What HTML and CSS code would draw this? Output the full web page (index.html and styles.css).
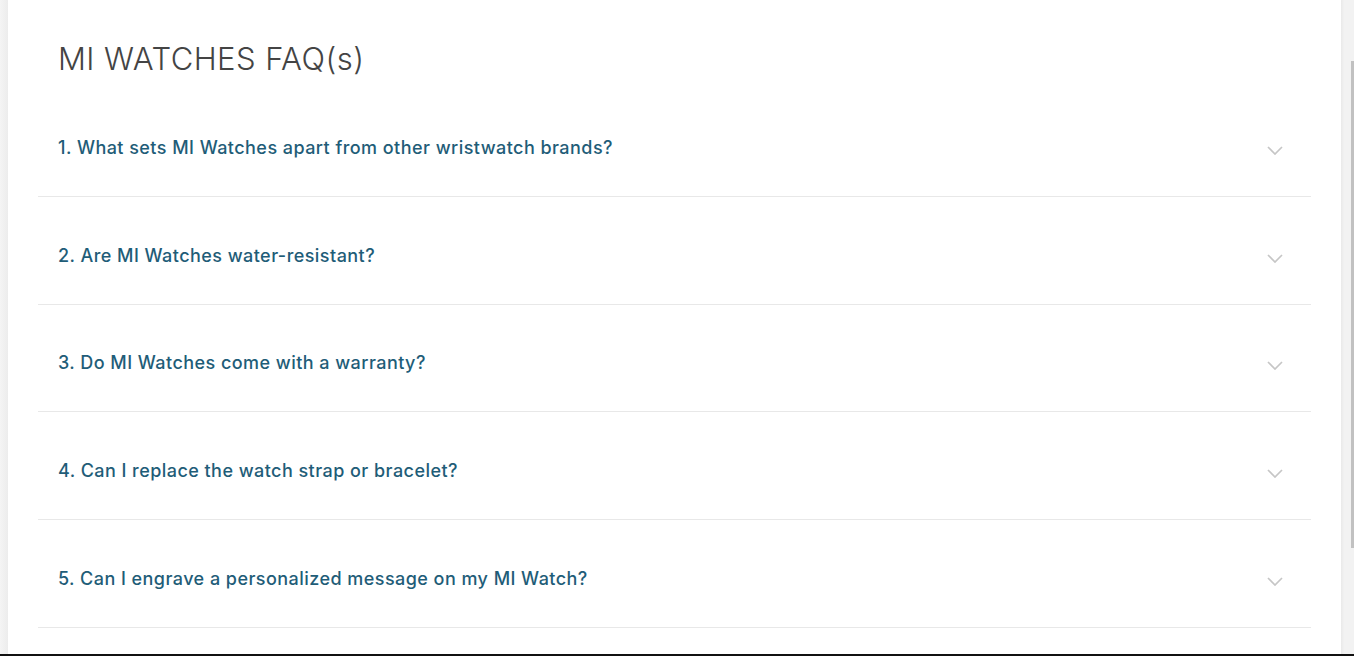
FILE: index.html
```html
<!DOCTYPE html>
<html lang="en">
<head>
<meta charset="utf-8">
<title>MI Watches FAQ</title>
<link rel="stylesheet" href="styles.css">
</head>
<body>
<div class="page">
  <div class="gutter"></div>
  <main class="card">
    <h1 class="title">MI WATCHES FAQ(s)</h1>
    <div class="faq">
      <div class="item"><span class="q">1. What sets MI Watches apart from other wristwatch brands?</span><svg class="chev" viewBox="0 0 16 9" width="16" height="9"><path d="M1 1l7 7 7-7" fill="none" stroke="#c6c6c6" stroke-width="1.7"/></svg></div>
      <div class="item"><span class="q">2. Are MI Watches water-resistant?</span><svg class="chev" viewBox="0 0 16 9" width="16" height="9"><path d="M1 1l7 7 7-7" fill="none" stroke="#c6c6c6" stroke-width="1.7"/></svg></div>
      <div class="item"><span class="q">3. Do MI Watches come with a warranty?</span><svg class="chev" viewBox="0 0 16 9" width="16" height="9"><path d="M1 1l7 7 7-7" fill="none" stroke="#c6c6c6" stroke-width="1.7"/></svg></div>
      <div class="item"><span class="q">4. Can I replace the watch strap or bracelet?</span><svg class="chev" viewBox="0 0 16 9" width="16" height="9"><path d="M1 1l7 7 7-7" fill="none" stroke="#c6c6c6" stroke-width="1.7"/></svg></div>
      <div class="item"><span class="q">5. Can I engrave a personalized message on my MI Watch?</span><svg class="chev" viewBox="0 0 16 9" width="16" height="9"><path d="M1 1l7 7 7-7" fill="none" stroke="#c6c6c6" stroke-width="1.7"/></svg></div>
    </div>
  </main>
  <div class="scrollbar"><div class="thumb"></div></div>
</div>
</body>
</html>
```

FILE: styles.css
```css
html, body {
  margin: 0;
  padding: 0;
  height: 656px;
  overflow: hidden;
}
body {
  font-family: Inter, "Noto Sans", sans-serif;
  background: #f1f1f1;
}
.page {
  display: flex;
  height: 654px;
  border-bottom: 2px solid #111;
}
.gutter {
  width: 8px;
  flex: none;
  background: linear-gradient(to right, #f4f4f4, #ececec);
}
.card {
  flex: 1;
  background: #fff;
  padding: 0 30px;
  overflow: hidden;
}
.title {
  margin: 37px 0 0 20px;
  font-weight: 300;
  font-size: 31px;
  line-height: 44px;
  color: #444;
  letter-spacing: 0.45px;
}
.faq {
  margin-top: 8px;
}
.item {
  display: flex;
  align-items: center;
  justify-content: space-between;
  height: 106.75px;
  border-bottom: 1px solid #e8e8e8;
  padding: 0 28px 0 20px;
}
.q {
  font-size: 18px;
  font-weight: 450;
  color: #1f5d78;
  margin-top: 10px;
  letter-spacing: 0.45px;
}
.chev {
  margin-top: 16px;
  flex: none;
}
.scrollbar {
  width: 13px;
  flex: none;
  background: linear-gradient(to right, #e9e9e9, #f2f2f2 25%, #f2f2f2);
  position: relative;
}
.thumb {
  position: absolute;
  left: 10px;
  right: 0;
  top: 61px;
  height: 487px;
  background: #c1c1c1;
}
```
